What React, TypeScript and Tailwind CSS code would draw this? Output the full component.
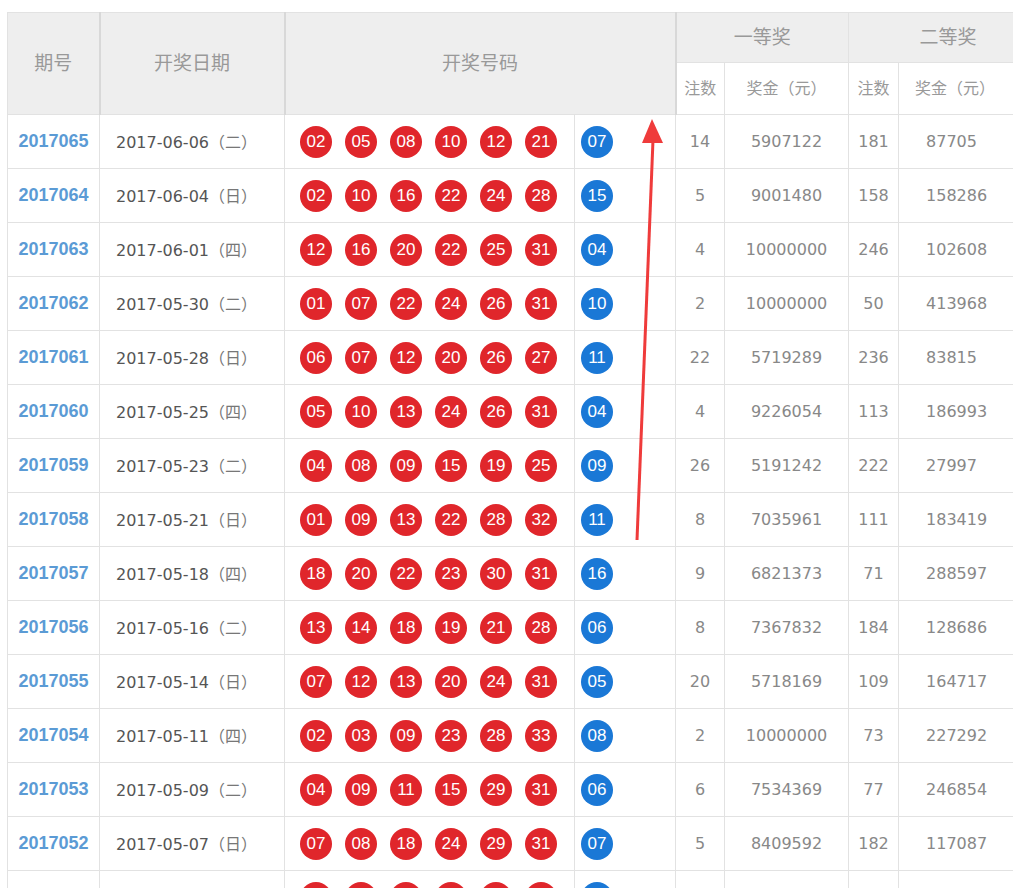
import React from "react";

const rows: [string, string, string, string[], string, string, string, string, string][] = [
  ["2017065","2017-06-06","二",["02","05","08","10","12","21"],"07","14","5907122","181","87705"],
  ["2017064","2017-06-04","日",["02","10","16","22","24","28"],"15","5","9001480","158","158286"],
  ["2017063","2017-06-01","四",["12","16","20","22","25","31"],"04","4","10000000","246","102608"],
  ["2017062","2017-05-30","二",["01","07","22","24","26","31"],"10","2","10000000","50","413968"],
  ["2017061","2017-05-28","日",["06","07","12","20","26","27"],"11","22","5719289","236","83815"],
  ["2017060","2017-05-25","四",["05","10","13","24","26","31"],"04","4","9226054","113","186993"],
  ["2017059","2017-05-23","二",["04","08","09","15","19","25"],"09","26","5191242","222","27997"],
  ["2017058","2017-05-21","日",["01","09","13","22","28","32"],"11","8","7035961","111","183419"],
  ["2017057","2017-05-18","四",["18","20","22","23","30","31"],"16","9","6821373","71","288597"],
  ["2017056","2017-05-16","二",["13","14","18","19","21","28"],"06","8","7367832","184","128686"],
  ["2017055","2017-05-14","日",["07","12","13","20","24","31"],"05","20","5718169","109","164717"],
  ["2017054","2017-05-11","四",["02","03","09","23","28","33"],"08","2","10000000","73","227292"],
  ["2017053","2017-05-09","二",["04","09","11","15","29","31"],"06","6","7534369","77","246854"],
  ["2017052","2017-05-07","日",["07","08","18","24","29","31"],"07","5","8409592","182","117087"],
  ["2017051","2017-05-04","四",["03","07","12","16","22","30"],"09","7","6902311","95","201448"],
];

const Ball = ({ n, blue }: { n: string; blue?: boolean }) => (
  <span
    className={`inline-flex items-center justify-center w-[32px] h-[32px] rounded-full text-white text-[17px] ${blue ? "bg-[#1a78d6]" : "bg-[#e0262b]"}`}
    style={{ fontFamily: '"Liberation Sans", Arial, sans-serif' }}
  >
    {n}
  </span>
);

const cb = "border border-[#e2e2e2]";

export default function App() {
  return (
    <div className="relative w-[1013px] h-[888px] overflow-hidden bg-white" style={{ fontFamily: '"DejaVu Sans", "Noto Sans CJK SC", sans-serif' }}>
      <div className="pt-[12px] pl-[7px]">
        <table className="border-collapse table-fixed" style={{ width: 1040 }}>
          <colgroup>
            <col style={{ width: 92 }} />
            <col style={{ width: 185 }} />
            <col style={{ width: 290 }} />
            <col style={{ width: 101 }} />
            <col style={{ width: 49 }} />
            <col style={{ width: 124 }} />
            <col style={{ width: 50 }} />
            <col style={{ width: 149 }} />
          </colgroup>
          <thead>
            <tr className="h-[50px] text-[#999] text-[19px]">
              <th rowSpan={2} className={`${cb} bg-[#eeeeee] font-normal border-r-2 border-r-[#d8d8d8]`}>期号</th>
              <th rowSpan={2} className={`${cb} bg-[#eeeeee] font-normal border-r-2 border-r-[#d8d8d8]`}>开奖日期</th>
              <th rowSpan={2} colSpan={2} className={`${cb} bg-[#eeeeee] font-normal border-r-2 border-r-[#d8d8d8]`}>开奖号码</th>
              <th colSpan={2} className={`${cb} bg-[#eeeeee] font-normal`}>一等奖</th>
              <th colSpan={2} className={`${cb} bg-[#eeeeee] font-normal`}>二等奖</th>
            </tr>
            <tr className="h-[52px] text-[#999] text-[16px]">
              <th className={`${cb} font-normal`}>注数</th>
              <th className={`${cb} font-normal`}>奖金（元）</th>
              <th className={`${cb} font-normal`}>注数</th>
              <th className={`${cb} font-normal text-left pl-[16px]`}>奖金（元）</th>
            </tr>
          </thead>
          <tbody>
            {rows.map((r) => (
              <tr key={r[0]} className="h-[54px] text-[16px]">
                <td className={`${cb} text-center font-bold text-[#5b9bd5] text-[18px]`} style={{ fontFamily: '"Liberation Sans", Arial, sans-serif' }}>{r[0]}</td>
                <td className={`${cb} pl-[16px] text-[#555]`}>
                  {r[1]}<span className="text-[#777]" style={{ fontFamily: '"Noto Sans CJK SC", sans-serif' }}>（{r[2]}）</span>
                </td>
                <td className={`${cb} pl-[15px]`}>
                  <div className="flex gap-[13px]">
                    {r[3].map((b, i) => <Ball key={i} n={b} />)}
                  </div>
                </td>
                <td className={`${cb} pl-[6px]`}><Ball n={r[4]} blue /></td>
                <td className={`${cb} text-center text-[#888]`}>{r[5]}</td>
                <td className={`${cb} text-center text-[#888]`}>{r[6]}</td>
                <td className={`${cb} text-center text-[#888]`}>{r[7]}</td>
                <td className={`${cb} text-left pl-[27px] text-[#888]`}>{r[8]}</td>
              </tr>
            ))}
          </tbody>
        </table>
      </div>
      <svg className="absolute left-0 top-0 pointer-events-none" width="1013" height="888">
        <line x1="637" y1="540" x2="653" y2="140" stroke="#ef3b3b" strokeWidth="3" />
        <polygon points="652,119 642,143 663,143" fill="#ef3b3b" />
      </svg>
    </div>
  );
}
